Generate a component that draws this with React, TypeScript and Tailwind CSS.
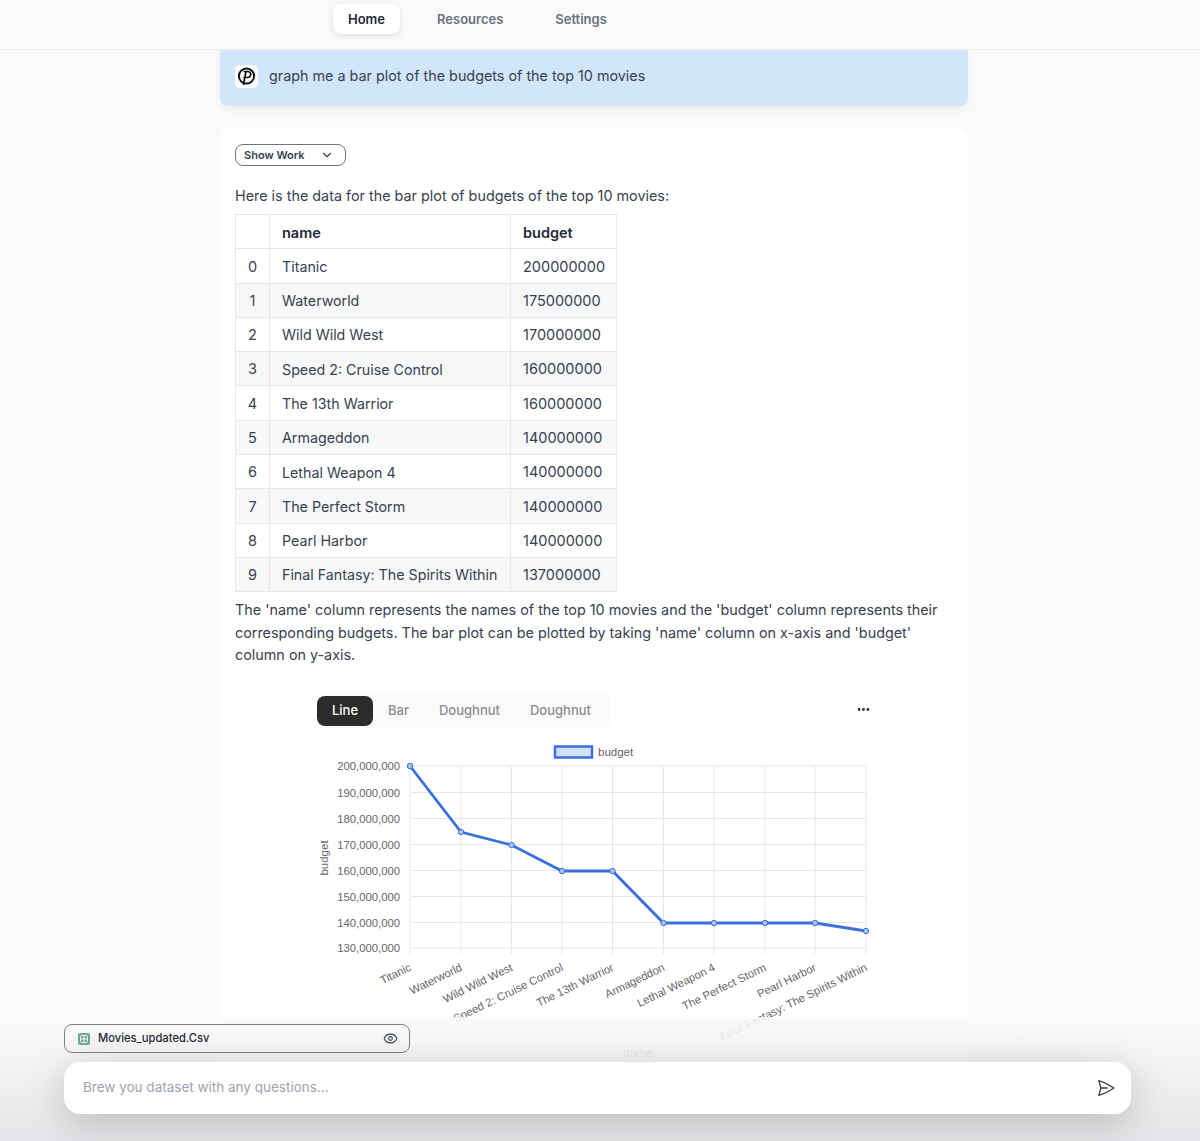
import React from 'react';
import { ChevronDown, Ellipsis, Eye } from 'lucide-react';

const rows = [
  ['Titanic', '200000000'],
  ['Waterworld', '175000000'],
  ['Wild Wild West', '170000000'],
  ['Speed 2: Cruise Control', '160000000'],
  ['The 13th Warrior', '160000000'],
  ['Armageddon', '140000000'],
  ['Lethal Weapon 4', '140000000'],
  ['The Perfect Storm', '140000000'],
  ['Pearl Harbor', '140000000'],
  ['Final Fantasy: The Spirits Within', '137000000'],
];

// chart svg starts at x=300, y=735 of the page
const xs = [110, 161, 211.5, 262, 312.5, 363.5, 414, 465, 515, 566];
const ys = [31, 57.5, 83.5, 109.5, 135.5, 161.5, 187.5, 213];
const yLabels = ['200,000,000', '190,000,000', '180,000,000', '170,000,000', '160,000,000', '150,000,000', '140,000,000', '130,000,000'];
const pointYs = [31, 97, 110, 136, 136, 188, 188, 188, 188, 196];

const Chart: React.FC = () => (
  <svg width="600" height="335" className="block ml-[65px]" style={{ fontFamily: '"Liberation Sans", Arial, sans-serif' }}>
    <rect x="255" y="11.5" width="37" height="11" fill="#d3e0f9" stroke="#3b6fdc" strokeWidth="2.5" />
    <text x="298" y="21" fontSize="11.5" fill="#666">budget</text>
    {xs.map((x) => (
      <line key={x} x1={x} x2={x} y1="31" y2="219" stroke="#e4e5e8" strokeWidth="1" />
    ))}
    {ys.map((y) => (
      <line key={y} x1="110" x2="566" y1={y} y2={y} stroke="#e6e7ea" strokeWidth="1" />
    ))}
    {yLabels.map((label, i) => (
      <text key={label} x="100" y={ys[i] + 4} fontSize="11.3" fill="#666" textAnchor="end">
        {label}
      </text>
    ))}
    <text transform="translate(28 123) rotate(-90)" fontSize="11.5" fill="#666" textAnchor="middle">
      budget
    </text>
    {rows.map(([name], i) => (
      <text key={name} transform={`translate(${xs[i] + 2} 235) rotate(-26)`} fontSize="11.3" fill="#666" textAnchor="end">
        {name}
      </text>
    ))}
    <text x="338" y="322" fontSize="12" fill="#666" textAnchor="middle">
      name
    </text>
    <polyline
      points={xs.map((x, i) => `${x},${pointYs[i]}`).join(' ')}
      fill="none"
      stroke="#3b6fdc"
      strokeWidth="2.8"
    />
    {xs.map((x, i) => (
      <circle key={x} cx={x} cy={pointYs[i]} r="2.7" fill="#a9c3f3" stroke="#3b6fdc" strokeWidth="1" />
    ))}
  </svg>
);

const App: React.FC = () => {
  return (
    <div
      className="relative h-[1141px] overflow-hidden bg-[#fafafa] text-[#374151]"
      style={{ fontFamily: 'Inter, "Liberation Sans", sans-serif' }}
    >
      {/* Top nav */}
      <div className="h-[50px] border-b border-[#ececee] flex items-start pl-[333px] pt-[4px] text-[13px] font-semibold">
        <div className="h-[30px] w-[67px] pt-[1px] flex items-center justify-center rounded-lg bg-white text-[#1f2937] shadow-[0_2px_6px_rgba(0,0,0,0.12)]">
          Home
        </div>
        <div className="h-[30px] pt-[1px] ml-[37px] flex items-center text-[#6b7280]">Resources</div>
        <div className="h-[30px] pt-[1px] ml-[52px] flex items-center text-[#6b7280]">Settings</div>
      </div>

      <div className="w-[748px] ml-[220px]">
        {/* Question */}
        <div className="h-[56px] flex items-center pl-[15px] bg-[#d1e6fa] rounded-b-lg shadow-[0_4px_10px_rgba(0,0,0,0.05)]">
          <svg width="23" height="23" viewBox="0 0 23 23" className="mb-[4px]">
            <rect width="23" height="23" rx="5" fill="#fff" />
            <circle cx="11.5" cy="11" r="7.6" fill="none" stroke="#111" strokeWidth="2" />
            <path d="M8.5 6.5h4.2a3 3 0 0 1 0 6H8.2M11 6.5 8.4 20" fill="none" stroke="#111" strokeWidth="1.7" />
          </svg>
          <span className="ml-[11px] mb-[4px] text-[14.35px] text-[#374151]">graph me a bar plot of the budgets of the top 10 movies</span>
        </div>

        {/* Answer */}
        <div className="mt-[22px] bg-white rounded-lg px-[15px] pt-[16px] h-[1000px]">
          <button className="w-[111px] h-[22px] flex items-center justify-between pl-[8px] pr-[11px] border border-[#6b7280] rounded-lg text-[11px] font-semibold text-[#374151]">
            Show Work
            <ChevronDown size={14} strokeWidth={2} />
          </button>

          <p className="mt-[19px] text-[14.37px] leading-[22px]">Here is the data for the bar plot of budgets of the top 10 movies:</p>

          <table className="mt-[7px] table-fixed w-[381px] border-collapse text-[14.5px] text-[#374151]">
            <thead>
              <tr className="h-[34.3px]">
                <th className="w-[34px] border border-[#e5e7eb]"></th>
                <th className="w-[241px] px-[12px] pt-[2px] border border-[#e5e7eb] text-left font-semibold text-[#1f2937]">name</th>
                <th className="w-[106px] px-[12px] pt-[2px] border border-[#e5e7eb] text-left font-semibold text-[#1f2937]">budget</th>
              </tr>
            </thead>
            <tbody>
              {rows.map(([name, budget], i) => (
                <tr key={name} className={`h-[34.3px] ${i % 2 === 1 ? 'bg-[#f6f8fa]' : 'bg-white'}`}>
                  <td className="pt-[1px] border border-[#e5e7eb] text-center">{i}</td>
                  <td className="px-[12px] pt-[1px] border border-[#e5e7eb] whitespace-nowrap text-[14.25px]">{name}</td>
                  <td className="px-[12px] pt-[1px] border border-[#e5e7eb]">{budget}</td>
                </tr>
              ))}
            </tbody>
          </table>

          <p className="mt-[7px] text-[14.37px] leading-[22.3px] w-[710px]">
            The 'name' column represents the names of the top 10 movies and the 'budget' column represents their
            corresponding budgets. The bar plot can be plotted by taking 'name' column on x-axis and 'budget'
            column on y-axis.
          </p>

          {/* Chart tabs */}
          <div className="mt-[26px] ml-[81px] flex items-center justify-between w-[555px]">
            <div className="w-[294px] h-[37px] flex items-center pl-[1px] bg-[#fafafa] rounded-lg text-[13px] font-medium text-[#8b8d92]">
              <div className="w-[56px] h-[30px] flex items-center justify-center rounded-lg bg-[#2b2b2b] text-white">Line</div>
              <span className="ml-[15px]">Bar</span>
              <span className="ml-[30px]">Doughnut</span>
              <span className="ml-[30px]">Doughnut</span>
            </div>
            <Ellipsis size={15} strokeWidth={2.5} className="mb-[3px] text-[#1f2937]" />
          </div>
          <div className="mt-[6px]">
            <Chart />
          </div>
        </div>
      </div>

      {/* Bottom input area, stays over the page */}
      <div className="absolute inset-x-0 bottom-0 h-[124px] pl-[64px] pr-[69px] pt-[7px] bg-linear-to-b from-[#fafafadd] to-[#e4e5e8f2]">
        <div className="w-[346px] h-[29px] flex items-center pl-[13px] pr-[11px] border border-[#7b7f86] rounded-lg">
          <span className="w-[12px] h-[12px] flex items-center justify-center rounded-[2px] bg-[#6fa88c]">
            <svg width="8" height="8" viewBox="0 0 8 8" fill="none" stroke="#fff" strokeWidth="0.9">
              <rect x="0.5" y="0.5" width="7" height="7" rx="1" />
              <path d="M0.5 4h7M4 0.5v7" />
            </svg>
          </span>
          <span className="ml-[8px] text-[11.2px] font-medium text-[#1f2937]">Movies_updated.Csv</span>
          <Eye size={15} strokeWidth={1.7} className="ml-auto text-[#374151]" />
        </div>
        <div className="mt-[9px] h-[52px] flex items-center justify-between pl-[19px] pr-[15px] bg-white rounded-2xl shadow-[0_10px_40px_rgba(0,0,0,0.2)]">
          <span className="mb-[2px] text-[13.5px] text-[#9ca3af]">Brew you dataset with any questions...</span>
          <svg width="20" height="20" viewBox="0 0 24 24" fill="none" stroke="#374151" strokeWidth="1.6" strokeLinecap="round" strokeLinejoin="round">
            <path d="M6 12 3.269 3.125A59.769 59.769 0 0 1 21.485 12 59.768 59.768 0 0 1 3.27 20.875L5.999 12Zm0 0h7.5" />
          </svg>
        </div>
      </div>
    </div>
  );
};

export default App;
